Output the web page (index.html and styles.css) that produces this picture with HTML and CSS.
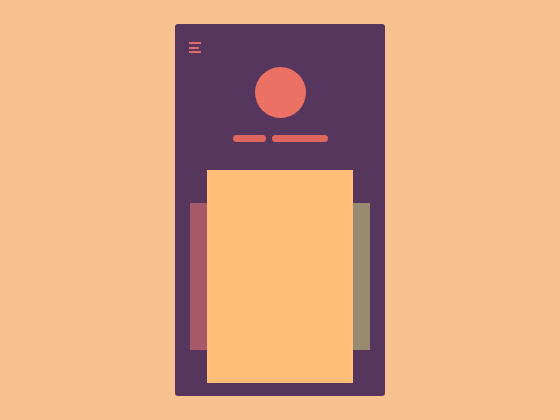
FILE: index.html
```html
<!DOCTYPE html>
<html>
<head>
<meta charset="utf-8">
<link rel="stylesheet" href="styles.css">
</head>
<body>
<div class="phone">
  <div class="menu">
    <span class="bar bar-long"></span>
    <span class="bar bar-short"></span>
    <span class="bar bar-long"></span>
  </div>
  <div class="avatar"></div>
  <div class="pills">
    <span class="pill pill-a"></span>
    <span class="pill pill-b"></span>
  </div>
  <div class="stage">
    <div class="side side-left"></div>
    <div class="side side-right"></div>
    <div class="front"></div>
  </div>
</div>
</body>
</html>
```
FILE: styles.css
```css
html, body {
  margin: 0;
  padding: 0;
}
body {
  width: 560px;
  height: 420px;
  background: #f8c290;
  display: flex;
  align-items: center;
  justify-content: center;
  font-family: "Liberation Sans", sans-serif;
}
.phone {
  width: 210px;
  height: 372px;
  box-sizing: border-box;
  background: #57365d;
  border-radius: 3px;
  padding: 18px 14px 13px;
  display: flex;
  flex-direction: column;
}
.menu {
  display: flex;
  flex-direction: column;
  gap: 2.5px;
  height: 11px;
}
.bar {
  display: block;
  height: 2px;
  background: #e06c68;
}
.bar-long { width: 12px; }
.bar-short { width: 10px; }
.avatar {
  align-self: center;
  width: 51px;
  height: 51px;
  border-radius: 50%;
  background: #ea7163;
  margin-top: 14px;
}
.pills {
  display: flex;
  justify-content: center;
  gap: 6px;
  margin-top: 17px;
}
.pill {
  display: block;
  height: 7px;
  border-radius: 4px;
  background: #e0675e;
}
.pill-a { width: 33px; }
.pill-b { width: 56px; }
.stage {
  align-self: center;
  width: 180px;
  height: 213px;
  margin-top: 28px;
  display: grid;
  grid-template-areas: "s";
}
.side, .front {
  grid-area: s;
}
.side {
  width: 40px;
  height: 147px;
  margin-top: 33px;
}
.side-left {
  justify-self: start;
  background: #a65a69;
}
.side-right {
  justify-self: end;
  background: #988b70;
}
.front {
  justify-self: center;
  width: 146px;
  height: 213px;
  background: #ffbd78;
}
```
